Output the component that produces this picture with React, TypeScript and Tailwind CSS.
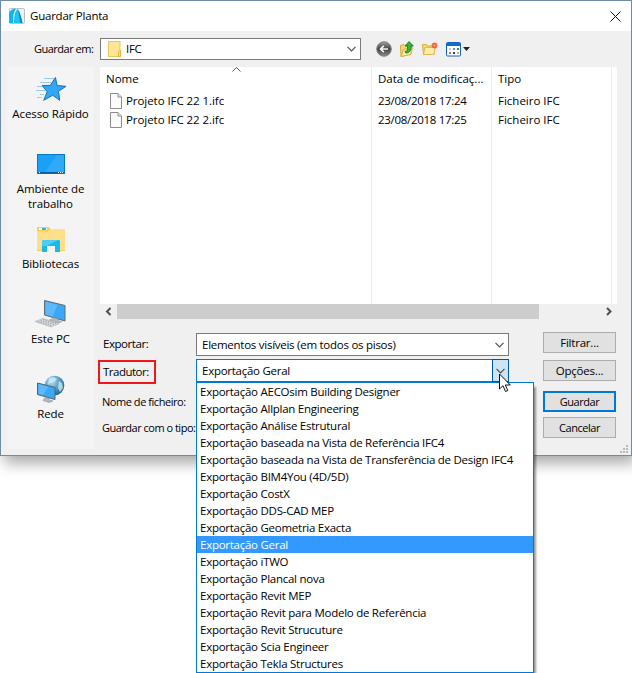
import type { ReactNode } from 'react'

const TRANSLATORS = [
    'Exportação AECOsim Building Designer',
    'Exportação Allplan Engineering',
    'Exportação Análise Estrutural',
    'Exportação baseada na Vista de Referência IFC4',
    'Exportação baseada na Vista de Transferência de Design IFC4',
    'Exportação BIM4You (4D/5D)',
    'Exportação CostX',
    'Exportação DDS-CAD MEP',
    'Exportação Geometria Exacta',
    'Exportação Geral',
    'Exportação iTWO',
    'Exportação Plancal nova',
    'Exportação Revit MEP',
    'Exportação Revit para Modelo de Referência',
    'Exportação Revit Strucuture',
    'Exportação Scia Engineer',
    'Exportação Tekla Structures',
]

const FILES = [
    { name: 'Projeto IFC 22 1.ifc', date: '23/08/2018 17:24', type: 'Ficheiro IFC' },
    { name: 'Projeto IFC 22 2.ifc', date: '23/08/2018 17:25', type: 'Ficheiro IFC' },
]

function AppIcon() {
    return (
        <svg width="16" height="16" viewBox="0 0 16 16">
            <rect x=".5" y=".5" width="15" height="15" rx="1" fill="#eef0f1" stroke="#b9c2c9" />
            <path d="M0 15V5C1 2.500 3 1 7 .5 4.500 4 4 9 4 15z" fill="#12b5ea" />
            <path d="M5 15C5 8 6 3 8.500 1c2.500 3 3.500 8 5 14z" fill="#1cc3f3" />
            <path d="M8.500 1c2.500 3 3.500 8 5 14h-2C10.500 9 9.800 4 8.500 1z" fill="#0a80b4" />
        </svg>
    )
}

function Chevron() {
    return (
        <svg width="9" height="6" viewBox="0 0 9 6" fill="none" stroke="#505050" strokeWidth="1.2">
            <path d="M.5 .8l4 4 4-4" />
        </svg>
    )
}

function FolderIcon() {
    return (
        <svg width="14" height="16" viewBox="0 0 14 16">
            <rect x=".5" y=".5" width="11.5" height="15" fill="#ffe696" stroke="#e9c95f" />
            <path d="M10.500 15.500V10.500l1-1h1v6z" fill="#ffe08a" stroke="#dfb63f" />
        </svg>
    )
}

function FileIcon() {
    return (
        <svg width="12" height="16" viewBox="0 0 12 16" fill="#fbfbfb" stroke="#8d8d8d">
            <path d="M.5 .5h7.500l3.500 3.500v11.500H.5z" />
            <path d="M8 .5V4h3.500" fill="#e4e4e4" />
        </svg>
    )
}

function BackIcon() {
    return (
        <svg width="16" height="16" viewBox="0 0 16 16">
            <defs>
                <linearGradient id="back" x1="0" y1="0" x2="0" y2="1">
                    <stop offset="0" stopColor="#a0a0a0" />
                    <stop offset=".5" stopColor="#444" />
                    <stop offset="1" stopColor="#8a8a8a" />
                </linearGradient>
            </defs>
            <circle cx="8" cy="8" r="7.300" fill="url(#back)" stroke="#858585" />
            <path d="M12 8H4.500M7.800 4.800L4.600 8l3.200 3.200" fill="none" stroke="#f4f4f4" strokeWidth="1.700" />
        </svg>
    )
}

function UpIcon() {
    return (
        <svg width="14" height="16" viewBox="0 0 14 16">
            <path d="M.5 4.500l3.500-1 1 1 6-.5v9L1 15.500z" fill="#f4d673" stroke="#d5a83a" />
            <path d="M1 15.500L3.500 8.500l9-2-2 7z" fill="#ffeb9c" stroke="#d9b040" />
            <path d="M5 10.500c2.500 0 3-2 2.500-5.500H5L9 .6 13.300 5H11c.6 4-1.500 7-5 7z" fill="#35b535" stroke="#147a18" strokeWidth=".9" />
        </svg>
    )
}

function NewFolderIcon() {
    return (
        <svg width="16" height="14" viewBox="0 0 16 14">
            <path d="M.5 2.500h4l1 1.500H11l1 8.500H1.500z" fill="#f5d877" stroke="#d9ad45" />
            <path d="M1.500 12.500l1.500-7h10.500l-2 7z" fill="#ffeda6" stroke="#ddb855" />
            <g stroke="#f0623a" strokeWidth="1.500">
                <path d="M12.500 .5v6M9.500 3.500h6M10.400 1.400l4.200 4.200M14.600 1.400l-4.200 4.200" />
            </g>
            <circle cx="12.500" cy="3.500" r="1" fill="#ffb27a" />
        </svg>
    )
}

function ViewIcon() {
    return (
        <svg width="24" height="15" viewBox="0 0 24 15">
            <rect x=".5" y=".5" width="14" height="13.500" rx="1" fill="#fff" stroke="#1264bd" />
            <path d="M0 1h15v3H0z" fill="#0f6bd0" />
            <path d="M3 6h2v2H3z" fill="#c7ccd8" />
            <path d="M7 6h2v2H7z" fill="#5f8fd0" />
            <path d="M11 6h2v2h-2z" fill="#2c9a4a" />
            <path d="M3 10h2v2H3z" fill="#d4645f" />
            <path d="M7 10h2v2H7z" fill="#1b3f94" />
            <path d="M11 10h2v2h-2z" fill="#e5a83a" />
            <path d="M17 5h7l-3.500 4z" fill="#222" />
        </svg>
    )
}

function QuickAccessIcon() {
    return (
        <svg width="32" height="26" viewBox="0 0 32 26">
            <path d="M9 2.500h10M5 6.500h11M2 10.500h8M1 14.500h9M5 18.500h4M2 21.500h5" stroke="#9cc9e6" />
            <path d="M20.500 1.500l1.500 8 9 .8-7.500 5 1.200 9-7-5-9 5 3.500-8.500-5-6.300h8z" fill="#35a5f5" stroke="#1272b8" />
        </svg>
    )
}

function DesktopIcon() {
    return (
        <svg width="28" height="20" viewBox="0 0 28 20">
            <rect x=".5" y=".5" width="27" height="19" fill="#1ba0f8" stroke="#0877c4" />
            <path d="M8 18L20 1h7v17z" fill="#46b2fb" opacity=".5" />
            <path d="M1 18h26v1.500H1z" fill="#0a5e9c" />
            <path d="M2 18.500h1M21 18.500h5" stroke="#fff" strokeDasharray="1 1" />
        </svg>
    )
}

function LibrariesIcon() {
    return (
        <svg width="28" height="25" viewBox="0 0 28 25">
            <path d="M0 0h12l1.500 2H28v22H0z" fill="#f9cf52" />
            <path d="M0 4h12l2-2h14v21H0z" fill="#ffe08a" />
            <path d="M2 1h8v2H2z" fill="#fff" />
            <path d="M5 1h4v2H5z" fill="#35b4da" />
            <path d="M10 19h8v6h-8z" fill="#f4f4f4" />
            <path d="M5 25V14l1-1h16l1 1v11h-5v-6h-8v6z" fill="#19b9ee" />
            <path d="M5 19v-5l1-1h15L10 19z" fill="#4ccdf6" />
        </svg>
    )
}

function ComputerIcon() {
    return (
        <svg width="32" height="28" viewBox="0 0 32 28">
            <path d="M9.500 .5l20.500 5v15.500l-20.500-6z" fill="#3ba8f6" stroke="#5e6a74" />
            <path d="M10.500 1.800l12 3-5 12-7-2.200z" fill="#74c4fb" opacity=".6" />
            <path d="M18 17.500l5 1.500v1.500l4 1.200-4 1.300-9-3 3-1z" fill="#b3bac0" stroke="#8c949a" strokeWidth=".5" />
            <path d="M0 21.500l8-3 16 5-8 3.500z" fill="#d9dcdf" stroke="#a5aaae" strokeWidth=".6" />
            <path d="M3 21.500l13 4M5.500 20.500l13 4M8 19.600l13 4" stroke="#8e9499" strokeWidth=".8" strokeDasharray="1.500 1" />
        </svg>
    )
}

function NetworkIcon() {
    return (
        <svg width="28" height="28" viewBox="0 0 28 28">
            <defs>
                <radialGradient id="globe" cx=".35" cy=".3" r=".8">
                    <stop offset="0" stopColor="#b8e0f2" />
                    <stop offset=".5" stopColor="#5a9fc4" />
                    <stop offset="1" stopColor="#1e5d82" />
                </radialGradient>
            </defs>
            <circle cx="17.500" cy="10.500" r="9.800" fill="url(#globe)" />
            <path d="M12 3l5-1 3 2-3 3-4 1-2 2zM22 6l3 2 1 5-3 4-2-4z" fill="#d4eef7" opacity=".75" />
            <path d="M.5 8l17.500 4.500v12L.5 19.500z" fill="#3ba8f6" stroke="#56626c" />
            <path d="M1.500 9l10 2.700L6 20l-4.500-1.300z" fill="#74c4fb" opacity=".6" />
            <path d="M8 22.500l4 1.200v1l4 1.300-4 1.500-6-2z" fill="#b3bac0" stroke="#8c949a" strokeWidth=".6" />
        </svg>
    )
}

function Place({ icon, label }: { icon: ReactNode; label: string }) {
    return (
        <div className="flex h-[75px] flex-col items-center text-center leading-[15px] tracking-[-0.08px]">
            <div className="flex h-[30px] items-center justify-center">{icon}</div>
            <div className="mt-[2px] w-[84px]">{label}</div>
        </div>
    )
}

function Button({ children, primary, narrow }: { children: ReactNode; primary?: boolean; narrow?: boolean }) {
    return (
        <button
            className={
                primary
                    ? 'h-[21px] w-[73px] border-2 border-[#0078d7] bg-[#e1e1e1] text-[11px] leading-[17px] tracking-[-0.45px]'
                    : narrow
                      ? 'h-[21px] w-[73px] border border-[#adadad] bg-[#e1e1e1] text-[11px] leading-[19px] tracking-[-0.45px]'
                      : 'h-[21px] w-[73px] border border-[#adadad] bg-[#e1e1e1] leading-[19px] tracking-[-0.2px]'
            }
        >
            {children}
        </button>
    )
}

export default function App() {
    return (
        <div className="relative h-[673px] w-[632px] overflow-hidden bg-white font-['Open_Sans','Noto_Sans',sans-serif] text-[11.5px] text-black">
            <div className="flex h-[456px] w-[632px] flex-col border border-[#6f8ba5] bg-[#f0f0f0] shadow-[4px_7px_14px_rgba(0,0,0,0.35)]">
                {/* Title bar */}
                <div className="flex h-[30px] items-center bg-white pl-2">
                    <AppIcon />
                    <span className="ml-[5px] flex-1 tracking-[-0.22px]">Guardar Planta</span>
                    <svg width="11" height="11" viewBox="0 0 11 11" stroke="#111" className="mr-[10px]">
                        <path d="M.5 .5l10 10M10.500 .5l-10 10" />
                    </svg>
                </div>

                {/* Location */}
                <div className="flex h-[36px] items-center">
                    <span className="w-[99px] whitespace-nowrap pl-[33px] text-[11px] tracking-[-0.5px]">Guardar em:</span>
                    <div className="flex h-[22px] w-[261px] items-center border border-[#7a7a7a] bg-white pl-[7px]">
                        <FolderIcon />
                        <span className="ml-[4px] flex-1 tracking-[-0.3px]">IFC</span>
                        <span className="mr-[4px]"><Chevron /></span>
                    </div>
                    <div className="ml-[15px] flex items-center">
                        <BackIcon />
                        <span className="ml-[8px]"><UpIcon /></span>
                        <span className="ml-[8px]"><NewFolderIcon /></span>
                        <span className="ml-[8px]"><ViewIcon /></span>
                    </div>
                </div>

                <div className="flex pl-[6px]">
                    {/* Places */}
                    <div className="h-[382px] w-[87px] bg-[#f4f4f4] pt-[7px]">
                        <Place icon={<QuickAccessIcon />} label="Acesso Rápido" />
                        <Place icon={<DesktopIcon />} label="Ambiente de trabalho" />
                        <Place icon={<LibrariesIcon />} label="Bibliotecas" />
                        <Place icon={<ComputerIcon />} label="Este PC" />
                        <Place icon={<NetworkIcon />} label="Rede" />
                    </div>

                    <div className="ml-[6px] w-[517px]">
                        {/* File list */}
                        <div className="flex h-[237px] bg-white">
                            <div className="w-[272px] border-r border-[#e6eef6]">
                                <div className="relative h-[24px] pl-[6px] leading-[24px]">
                                    Nome
                                    <svg width="9" height="5" viewBox="0 0 9 5" fill="none" stroke="#555" className="absolute left-[132px] top-0">
                                        <path d="M.5 4.500l4-4 4 4" />
                                    </svg>
                                </div>
                                {FILES.map((f) => (
                                    <div key={f.name} className="flex h-[19px] items-center pl-[10px]">
                                        <FileIcon />
                                        <span className="ml-[4px] tracking-[-0.06px]">{f.name}</span>
                                    </div>
                                ))}
                            </div>
                            <div className="w-[120px] border-r border-[#e6eef6] pl-[6px]">
                                <div className="h-[24px] leading-[24px]">Data de modificaç...</div>
                                {FILES.map((f) => (
                                    <div key={f.name} className="h-[19px] leading-[19px] tracking-[-0.3px]">{f.date}</div>
                                ))}
                            </div>
                            <div className="w-[120px] border-r border-[#e6eef6] pl-[6px]">
                                <div className="h-[24px] leading-[24px]">Tipo</div>
                                {FILES.map((f) => (
                                    <div key={f.name} className="h-[19px] leading-[19px]">{f.type}</div>
                                ))}
                            </div>
                        </div>
                        <div className="flex h-[15px] items-center">
                            <svg width="17" height="9" viewBox="0 0 17 9" fill="none" stroke="#505050" strokeWidth="2">
                                <path d="M10.500 1L7 4.500l3.500 3.500" />
                            </svg>
                            <div className="h-[15px] w-[422px] bg-[#cdcdcd]" />
                            <svg width="17" height="9" viewBox="0 0 17 9" fill="none" stroke="#505050" strokeWidth="2" className="ml-auto">
                                <path d="M7 1l3.500 3.500L7 8" />
                            </svg>
                        </div>

                        {/* Export settings */}
                        <div className="flex">
                            <div className="w-[96px] pt-[16px]">
                                <div className="h-[18px] pl-[3px] leading-[18px] tracking-[-0.45px]">Exportar:</div>
                                <div className="-ml-[2px] mt-[7px] h-[24px] w-[58px] border-2 border-[#f01818] pl-[3px] leading-[20px] tracking-[-0.5px]">Tradutor:</div>
                                <div className="mt-[9px] h-[18px] whitespace-nowrap pl-[2px] text-[11px] leading-[18px] tracking-[-0.45px]">Nome de ficheiro:</div>
                                <div className="mt-[8px] h-[18px] whitespace-nowrap pl-[2px] text-[11px] leading-[18px] tracking-[-0.5px]">Guardar com o tipo:</div>
                            </div>
                            <div className="w-[313px] pt-[14px] tracking-[-0.26px]">
                                <div className="flex h-[23px] items-center border border-[#7a7a7a] bg-white pl-[5px]">
                                    <span className="flex-1">Elementos visíveis (em todos os pisos)</span>
                                    <span className="mr-[4px]"><Chevron /></span>
                                </div>
                                <div className="mt-[3px] flex h-[23px] items-center border border-[#0078d7] bg-white pl-[5px]">
                                    <span className="flex-1">Exportação Geral</span>
                                    <div className="-mr-px flex h-[23px] w-[17px] items-center justify-center border border-[#005499] bg-[#cce4f7]">
                                        <Chevron />
                                    </div>
                                </div>
                            </div>
                            <div className="ml-[34px] flex flex-col pt-[13px]">
                                <Button>Filtrar...</Button>
                                <div className="mt-[7px] flex"><Button>Opções...</Button></div>
                                <div className="mt-[10px] flex"><Button primary>Guardar</Button></div>
                                <div className="mt-[5px] flex"><Button narrow>Cancelar</Button></div>
                            </div>
                        </div>
                    </div>
                </div>
            </div>

            {/* Resize grip */}
            <svg width="8" height="8" viewBox="0 0 8 8" fill="#b8b8b8" className="absolute left-[620px] top-[445px]">
                <path d="M6 0h2v2H6zM3 3h2v2H3zM6 3h2v2H6zM0 6h2v2H0zM3 6h2v2H3zM6 6h2v2H6z" />
            </svg>

            {/* Open translator list */}
            <ul className="absolute left-[196px] top-[382px] h-[291px] w-[338px] border border-[#0078d7] bg-white tracking-[-0.26px] shadow-[2px_5px_2px_rgba(0,0,0,0.4)]">
                {TRANSLATORS.map((t) => (
                    <li
                        key={t}
                        className={
                            t === 'Exportação Geral'
                                ? 'h-[17px] whitespace-nowrap bg-[#3399ff] pl-[3px] leading-[17px] text-white'
                                : 'h-[17px] whitespace-nowrap pl-[3px] leading-[17px]'
                        }
                    >
                        {t}
                    </li>
                ))}
            </ul>

            {/* Mouse pointer */}
            <svg width="13" height="20" viewBox="0 0 13 20" className="absolute left-[499px] top-[373px]">
                <path d="M.5 1v15l3.500-3.300 2.500 5.800 2.300-1-2.500-5.500h5z" fill="#fff" stroke="#111" />
            </svg>
        </div>
    )
}
